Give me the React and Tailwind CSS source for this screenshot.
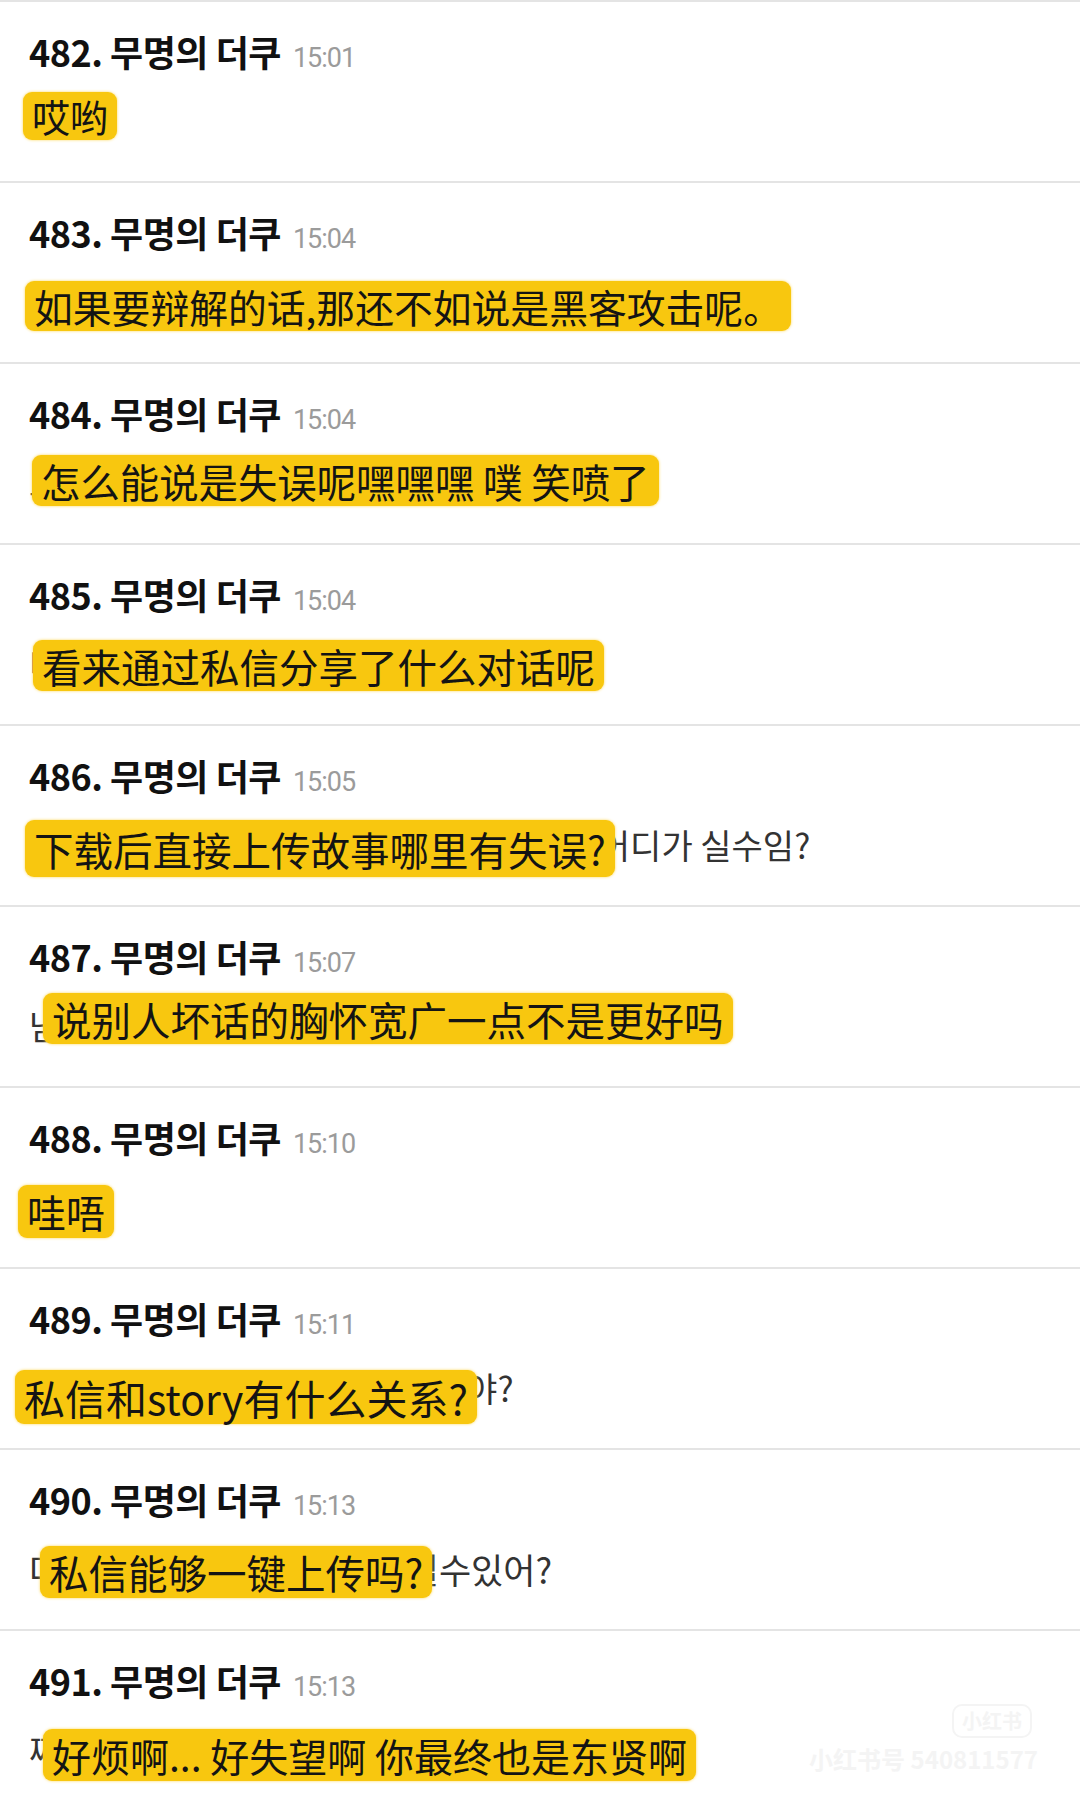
import React from 'react';

const rows = [
  { n: 482, time: '15:01', ko: '어머', zh: '哎哟', pos: 'left-[23px] top-[-7px]', box: 'text-[38px] leading-[48px]' },
  { n: 483, time: '15:04', ko: '변명하자면 차라리 해킹당했다고 하지 그래.', zh: '如果要辩解的话,那还不如说是黑客攻击呢。', pos: 'left-[25px] top-[1px]', box: 'text-[38.8px] leading-[50px]' },
  { n: 484, time: '15:04', ko: '그걸 어떻게 실수라고 해 ㅋㅋㅋ 풉 빵터짐', zh: '怎么能说是失误呢嘿嘿嘿 噗 笑喷了', pos: 'left-[32px] top-[-6px]', box: 'text-[39.4px] leading-[51px]' },
  { n: 485, time: '15:04', ko: '비밀 디엠으로 무슨 대화 공유했나 보네', zh: '看来通过私信分享了什么对话呢', pos: 'left-[33px] top-[-2px]', box: 'text-[39.5px] leading-[51px]' },
  { n: 486, time: '15:05', ko: '다운받아서 바로 스토리에 올린건데 그게 어디가 실수임?', zh: '下载后直接上传故事哪里有失误?', pos: 'left-[25px] top-[-3px]', box: 'text-[39.5px] leading-[57px]' },
  { n: 487, time: '15:07', ko: '남 욕하는 것보다 마음 넓은 게 더 낫지 않아?', zh: '说别人坏话的胸怀宽广一点不是更好吗', pos: 'left-[43px] top-[-11px]', box: 'text-[39.5px] leading-[51px]' },
  { n: 488, time: '15:10', ko: '와우', zh: '哇唔', pos: 'left-[18px] top-[0px]', box: 'text-[39px] leading-[53px]' },
  { n: 489, time: '15:11', ko: '디엠이랑 스토리가 무슨 상관이 야?', zh: '私信和story有什么关系?', pos: 'left-[15px] top-[4px]', box: 'text-[41px] leading-[54px]' },
  { n: 490, time: '15:13', ko: '다이렉트 메시지 한번에 올릴수있어?', koSize: 'text-[35px]', zh: '私信能够一键上传吗?', pos: 'left-[40px] top-[-1px]', box: 'text-[39.5px] leading-[52px]' },
  { n: 491, time: '15:13', ko: '짜증나... 실망이야 너도 결국 동현이구나', zh: '好烦啊... 好失望啊 你最终也是东贤啊', pos: 'left-[43px] top-[1px]', box: 'text-[39px] leading-[52px]' },
];

function Row({ r }) {
  return (
    <div className="h-[181px] border-b-2 border-[#e4e4e4] shrink-0">
      <div className="flex items-baseline h-[40px] pl-[29px] mt-[29px]">
        <span className="font-['Noto_Sans_CJK_KR',sans-serif] font-bold text-[36px] leading-[40px] text-[#111] tracking-[-0.5px]">
          {r.n}. 무명의 더쿠
        </span>
        <span className="ml-[12px] font-['Roboto',sans-serif] text-[27px] leading-[40px] text-[#9b9b9b] tracking-[-1px]">
          {r.time}
        </span>
      </div>
      <div className="relative mt-[28px] h-[44px]">
        <div className={`pl-[29px] font-['Noto_Sans_CJK_KR',sans-serif] ${r.koSize || 'text-[34px]'} leading-[44px] text-[#333] whitespace-nowrap`}>
          {r.ko}
        </div>
        <div
          className={`absolute ${r.pos} ${r.box} rounded-[9px] bg-[#f8c70f] px-[9px] whitespace-nowrap font-['Noto_Sans_CJK_SC',sans-serif] text-[#141414] shadow-[0_0_3px_#fbd75a]`}
        >
          {r.zh}
        </div>
      </div>
    </div>
  );
}

export default function App() {
  return (
    <div className="relative w-[1080px] h-[1804px] overflow-hidden bg-white border-t-2 border-[#e4e4e4] flex flex-col">
      {rows.map((r) => (
        <Row key={r.n} r={r} />
      ))}

      {/* faint xiaohongshu watermark */}
      <div className="absolute right-[42px] bottom-[30px] flex flex-col items-end gap-[6px] text-[#f4f4f4]">
        <div className="mr-[6px] rounded-[10px] border-2 border-[#f4f4f4] px-[8px] leading-[30px] text-[20px] font-bold font-['Noto_Sans_CJK_SC',sans-serif]">
          小红书
        </div>
        <div className="text-[24px] font-bold font-['Noto_Sans_CJK_SC',sans-serif] leading-[30px]">
          小红书号 540811577
        </div>
      </div>
    </div>
  );
}
